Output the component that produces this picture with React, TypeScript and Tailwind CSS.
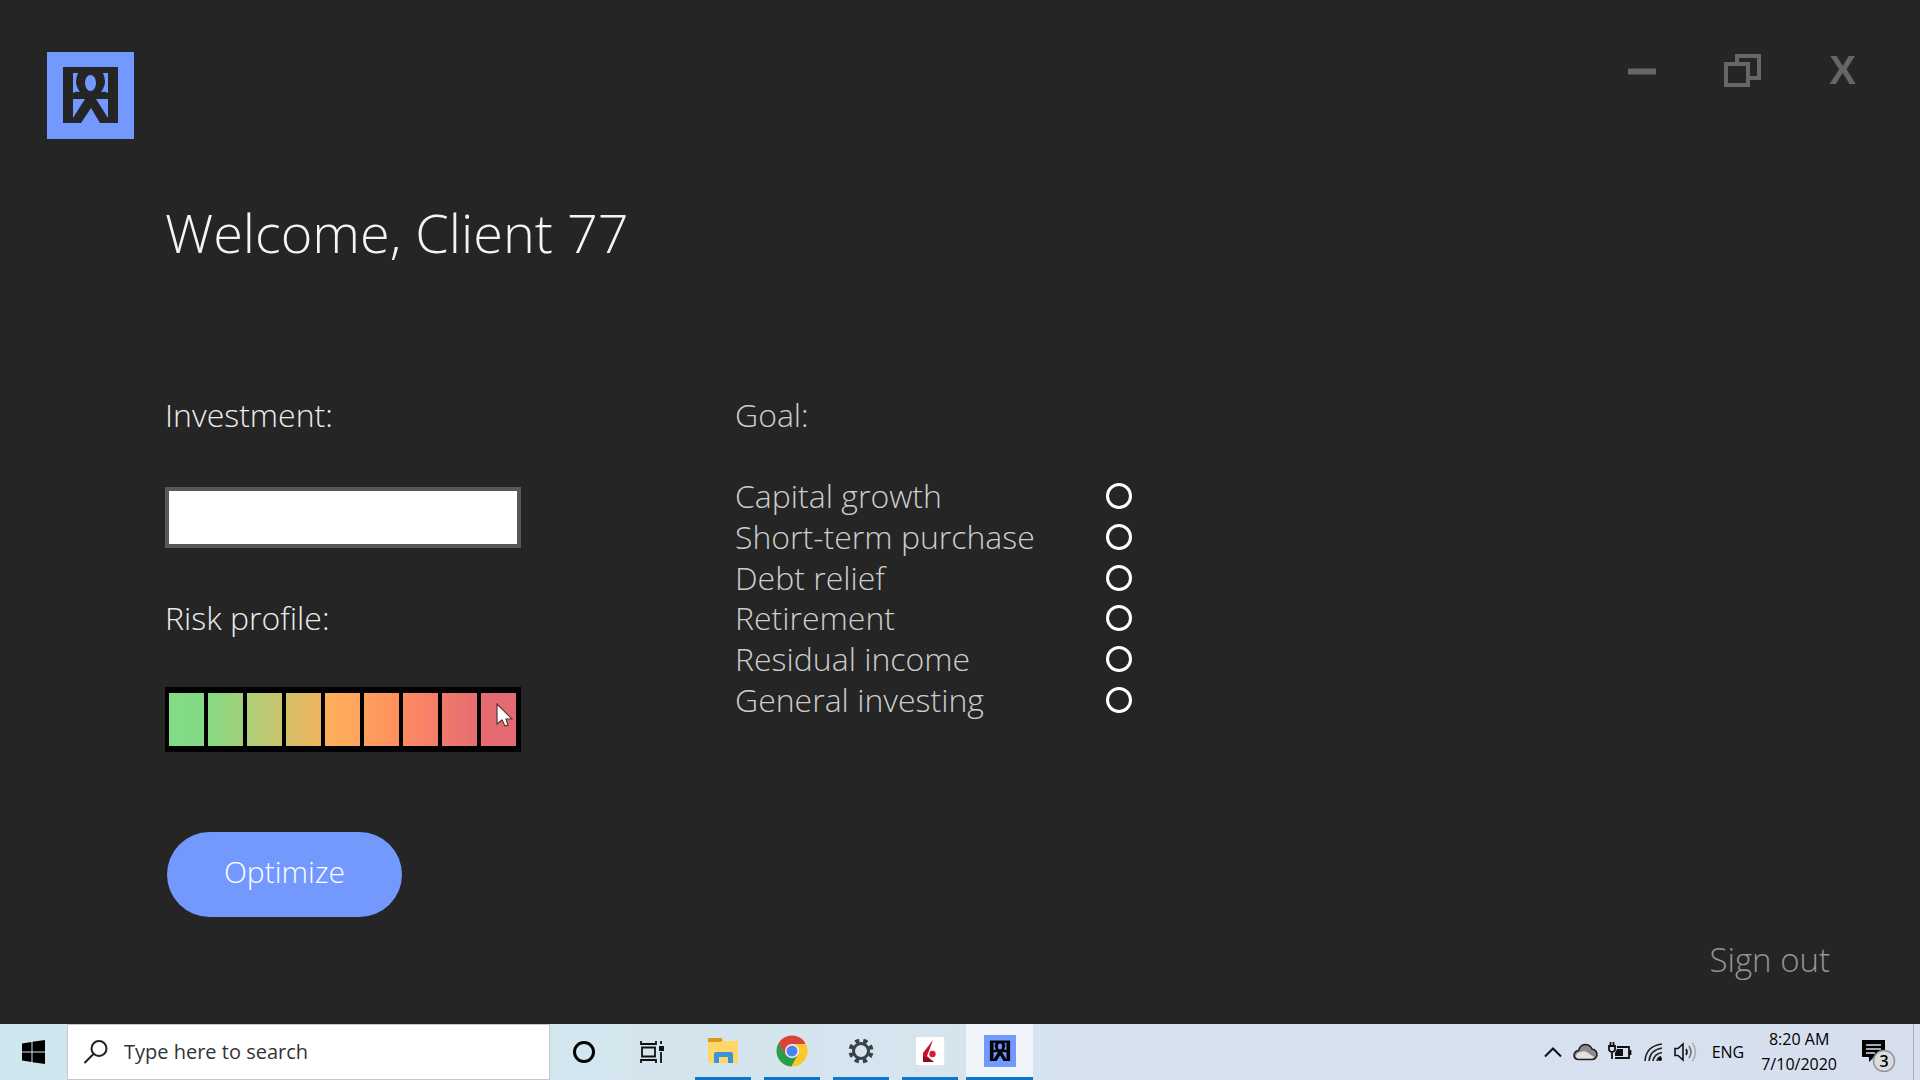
import type { ReactNode } from 'react'

const goals = [
  'Capital growth',
  'Short-term purchase',
  'Debt relief',
  'Retirement',
  'Residual income',
  'General investing',
]

const riskLevels = [
  'from-[#82dc86] to-[#85da84]',
  'from-[#86da83] to-[#a1d07a]',
  'from-[#add078] to-[#c8c46c]',
  'from-[#d3bf68] to-[#f0b45f]',
  'from-[#fdb05c] to-[#ffa55c]',
  'from-[#ffa05c] to-[#ff905f]',
  'from-[#fd8b62] to-[#f47d69]',
  'from-[#f07a6b] to-[#e66d71]',
  'from-[#e66c71] to-[#e36a73]',
]

function Logo({ className, mark }: { className?: string; mark: string }) {
  return (
    <svg viewBox="0 0 87 87" className={className} aria-hidden="true">
      <rect width="87" height="87" fill="#7399ff" />
      <path fill={mark} d="M16 15H71V71H53L44 56L34 71H16Z" />
      <path
        fill="#7399ff"
        d="M26 21H31Q27 30 31 37L33 40Q29 39 26 41ZM61 21H56Q60 30 56 37L54 40Q58 39 61 41ZM26 47H38L26 66ZM61 47H49L61 66Z"
      />
      <ellipse cx="43.5" cy="31" rx="5.5" ry="8" fill="#7399ff" />
    </svg>
  )
}

function Header() {
  return (
    <header className="flex items-start justify-between pt-[52px] pr-16 pl-[47px]">
      <Logo className="size-[87px]" mark="#252525" />
      <div className="flex items-center gap-[67px] text-[#666]">
        <button type="button" aria-label="Minimize">
          <svg width="29" height="36" viewBox="0 0 29 36">
            <path d="M0 19.5H28" stroke="currentColor" strokeWidth="6" />
          </svg>
        </button>
        <button type="button" aria-label="Restore">
          <svg width="38" height="36" viewBox="0 0 38 36" fill="none" stroke="currentColor" strokeWidth="4">
            <path d="M2 12H24V33H2Z" />
            <path d="M13 12V4H35V26H24" />
          </svg>
        </button>
        <button type="button" aria-label="Close" className="font-['Liberation_Sans',sans-serif] text-[40px] leading-9 font-bold">
          X
        </button>
      </div>
    </header>
  )
}

function RiskProfile() {
  return (
    <div role="group" aria-labelledby="risk" className="relative mt-[49px] flex h-[65px] gap-1 bg-black py-[6px] pr-[5px] pl-1">
      {riskLevels.map((color, i) => (
        <button key={color} type="button" aria-label={`${i + 1}`} className={`flex-1 bg-linear-to-r ${color}`} />
      ))}
      <svg viewBox="0 0 17 25" className="absolute top-4 right-2 h-[25px] w-[17px]" aria-hidden="true">
        <path d="M1 1V21L6 17L9 23L12 22L10 16H16Z" fill="#fff" stroke="#5a3237" strokeWidth="1.2" />
      </svg>
    </div>
  )
}

function Main() {
  return (
    <main className="flex-1 pl-[165px]">
      <h1 className="mt-[57px] text-[54px] leading-[72px] font-light text-[#f4f4f4]">Welcome, Client 77</h1>
      <div className="mt-[127px] flex gap-[214px] text-[32px] leading-10 font-light">
        <div className="w-[356px] text-[#ececec]">
          <label htmlFor="investment" className="block">
            Investment:
          </label>
          <input id="investment" type="text" className="mt-[52px] block h-[61px] w-full border-4 border-[#585858] bg-white px-3 text-black" />
          <h2 id="risk" className="mt-[50px]">
            Risk profile:
          </h2>
          <RiskProfile />
          <button type="button" className="mt-20 ml-0.5 h-[85px] w-[235px] rounded-full bg-[#7399ff] pb-1.5 text-[30px] text-white">
            Optimize
          </button>
        </div>
        <fieldset className="w-[397px] text-[#cdcdcd]">
          <legend>Goal:</legend>
          <div className="mt-[41px] flex h-[244px] flex-col justify-between">
            {goals.map((goal) => (
              <label key={goal} className="flex items-center justify-between">
                {goal}
                <input type="radio" name="goal" className="size-[26px] appearance-none rounded-full border-3 border-white checked:bg-white" />
              </label>
            ))}
          </div>
        </fieldset>
      </div>
    </main>
  )
}

function TaskButton({ label, active, children }: { label: string; active?: boolean; children: ReactNode }) {
  return (
    <button
      type="button"
      aria-label={label}
      className={`flex items-center justify-center border-b-3 border-[#0a78d0] ${active ? 'w-[67px] bg-[#eff5fa]' : 'w-14'}`}
    >
      {children}
    </button>
  )
}

function Taskbar() {
  return (
    <footer className="flex h-14 items-stretch bg-linear-to-r from-[#cfe7ee] via-[#d6e4ee] to-[#d7dfef] text-black">
      <button type="button" aria-label="Start" className="flex w-[67px] items-center justify-center">
        <svg width="23" height="24" viewBox="0 0 23 24">
          <path d="M0 3.5L9.5 2V11.5H0ZM10.5 1.8L23 0V11.5H10.5ZM0 12.5H9.5V22L0 20.5ZM10.5 12.5H23V24L10.5 22.2Z" />
        </svg>
      </button>
      <label className="flex w-[483px] items-center gap-4 border border-[#c4c8cc] bg-white pl-4">
        <svg width="24" height="24" viewBox="0 0 24 24" fill="none" stroke="#222" strokeWidth="2">
          <circle cx="15" cy="8.5" r="7.5" />
          <path d="M9.5 14L0.5 23" />
        </svg>
        <input type="text" aria-label="Search" placeholder="Type here to search" className="min-w-0 flex-1 text-[20px] outline-none placeholder:text-[#333]" />
      </label>
      <button type="button" aria-label="Cortana" className="ml-[22px] flex items-center">
        <svg width="24" height="24" viewBox="0 0 24 24">
          <circle cx="12" cy="12" r="9.5" fill="none" stroke="#000" strokeWidth="3" />
        </svg>
      </button>
      <button type="button" aria-label="Task view" className="ml-[43px] flex items-center">
        <svg width="26" height="24" viewBox="0 0 26 24" fill="none" stroke="#111" strokeWidth="1.8">
          <path d="M2 1V4H17V1M2 23V20H17V23M3 7.5H16V16.5H3ZM22 1V4M22 12V23" />
          <path d="M20 6H25V11H20Z" fill="#111" stroke="none" />
        </svg>
      </button>
      <nav className="ml-[30px] flex gap-[13px]">
        <TaskButton label="File Explorer">
          <svg width="32" height="27" viewBox="0 0 32 27">
            <path d="M1 1H14L16 4H31V26H1Z" fill="#ffd768" />
            <path d="M1 1H14L16 3L14 5H1Z" fill="#d99a1c" />
            <path d="M7 26V17Q7 15 9 15H24Q26 15 26 17V26H21V20H12V26Z" fill="#3d93d8" />
          </svg>
        </TaskButton>
        <TaskButton label="Chrome">
          <svg width="32" height="32" viewBox="0 0 32 32">
            <circle cx="16" cy="16" r="15.5" fill="#fbc62e" />
            <path d="M16 16L29.4 8.2A15.5 15.5 0 0 0 2.6 8.2L9.5 20Z" fill="#d8433a" />
            <path d="M2.6 8.2A15.5 15.5 0 0 0 15.5 31.5L22 20L16 16L9.5 19.5Z" fill="#2a9c50" />
            <path d="M16 9H29.8A15.5 15.5 0 0 1 15.5 31.5L22 19.5Z" fill="#fbc62e" />
            <circle cx="16" cy="16" r="7" fill="#f3f6f8" />
            <circle cx="16" cy="16" r="5.5" fill="#4a84ee" />
          </svg>
        </TaskButton>
        <TaskButton label="Settings">
          <svg width="26" height="26" viewBox="0 0 26 26" fill="none" stroke="#37424a">
            <circle cx="13" cy="13" r="7.5" strokeWidth="3" />
            <circle cx="13" cy="13" r="10.5" strokeWidth="4" strokeDasharray="4.2 4.047" strokeDashoffset="-2" />
          </svg>
        </TaskButton>
        <TaskButton label="Trader">
          <svg width="30" height="30" viewBox="0 0 30 30">
            <rect width="30" height="30" rx="2" fill="#fff" stroke="#c5ccd2" />
            <path d="M18 4L8 17V26H19L12 20Z" fill="#c8102e" />
            <path d="M8 20L19 26H8Z" fill="#8d0c20" />
            <circle cx="17.5" cy="18" r="3.2" fill="#d81e34" />
          </svg>
        </TaskButton>
      </nav>
      <div className="ml-2 flex">
        <TaskButton label="Portfolio" active>
          <Logo className="size-8" mark="#05070c" />
        </TaskButton>
      </div>
      <div className="ml-auto flex items-center text-base leading-[25px]">
        <svg width="20" height="12" viewBox="0 0 20 12" fill="none" stroke="#111" strokeWidth="2" aria-hidden="true">
          <path d="M2 10.5L10 2.5L18 10.5" />
        </svg>
        <svg width="25" height="18" viewBox="0 0 25 18" className="ml-[10px]" aria-hidden="true">
          <path d="M5 16.5Q1 16 1 12Q1.5 8 5.5 7.5Q7 2 12 1.5Q17 1.5 19 6Q24 7 24 12Q23 16.5 19 16.5Z" fill="#8c8c8c" stroke="#222" strokeWidth="1.6" />
          <path d="M3 13Q4 9 8 9Q12 7 15 10L21 14Q20 15.5 18 15.5H6Q3 15.5 3 13Z" fill="#e2e2e0" />
        </svg>
        <svg width="24" height="20" viewBox="0 0 24 20" className="ml-[10px]" fill="none" stroke="#111" strokeWidth="1.8" aria-hidden="true">
          <path d="M9 5H21V16H7M22.5 8V13M2.5 0V4M5.5 0V4M1 4H7V8Q6 10 4 10Q2 10 1 8ZM4 10V17" />
          <path d="M9 7H15V14H7V11Z" fill="#111" stroke="none" />
        </svg>
        <svg width="20" height="20" viewBox="0 0 20 20" className="ml-[12px]" fill="none" stroke="#222" strokeWidth="1.6" aria-hidden="true">
          <path d="M1 19Q2 4 18 2M5 19Q6 8 18 6M9 19Q10 12 18 10.5M13 19Q13.5 16 17 14.5" />
          <circle cx="16" cy="17" r="2" fill="#000" stroke="none" />
        </svg>
        <svg width="24" height="22" viewBox="0 0 24 22" className="ml-[10px]" fill="none" strokeWidth="1.6" aria-hidden="true">
          <path d="M1 7.5H4L9 3V19L4 14.5H1ZM12 8Q14 11 12 14" stroke="#111" />
          <path d="M15 5Q19 11 15 17" stroke="#6d747d" />
          <path d="M18.5 2Q24.5 11 18.5 20" stroke="#a6afbb" />
        </svg>
        <span className="ml-[14px]">ENG</span>
        <div className="ml-[17px] text-center">
          <div>8:20 AM</div>
          <div>7/10/2020</div>
        </div>
        <button type="button" aria-label="Notifications" className="relative mr-[17px] ml-[25px] h-10 w-[34px]">
          <svg width="34" height="40" viewBox="0 0 34 40">
            <path d="M0 8H23V25H12L7 30V25H0Z" />
            <path d="M4 13H19M4 17H19M4 21H13" stroke="#d7dfef" strokeWidth="1.5" />
            <circle cx="22" cy="29" r="10.5" fill="#dcdcdc" stroke="#8f949b" strokeWidth="1.5" />
          </svg>
          <span className="absolute right-0 -bottom-px w-6 text-center text-base leading-6 font-semibold">3</span>
        </button>
        <span className="h-full w-[7px] border-l border-[#a9b0bd]" />
      </div>
    </footer>
  )
}

export default function App() {
  return (
    <div className="flex min-h-screen flex-col bg-[#252525] font-['Open_Sans','Noto_Sans',sans-serif]">
      <Header />
      <Main />
      <a href="#" className="mr-[90px] mb-11 self-end text-[33px] leading-10 font-light text-[#959595]">
        Sign out
      </a>
      <Taskbar />
    </div>
  )
}
